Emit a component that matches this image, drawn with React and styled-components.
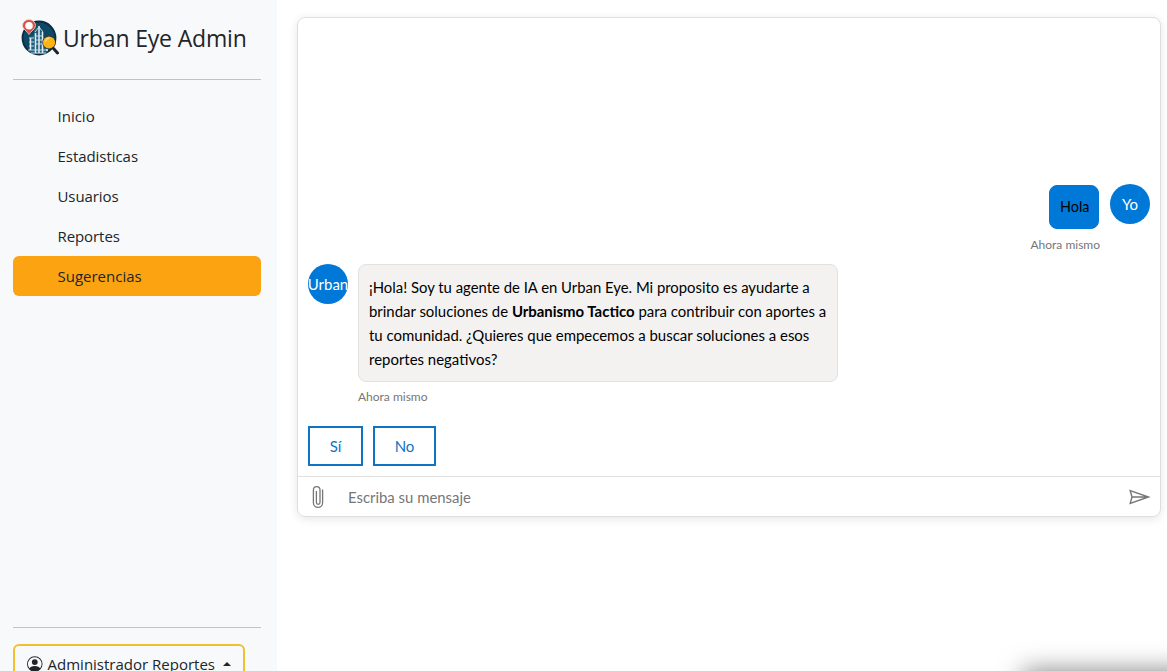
import React from 'react';
import styled, { createGlobalStyle } from 'styled-components';
import { BsPersonCircle } from 'react-icons/bs';

const GlobalStyle = createGlobalStyle`
  *, *::before, *::after { box-sizing: border-box; }
  body { margin: 0; background: #fff; overflow: hidden; }
`;

const Page = styled.div`
  display: flex;
  height: 671px;
  overflow: hidden;
  position: relative;
  font-family: 'Open Sans', 'Noto Sans', sans-serif;
  color: #212529;
`;

const Sidebar = styled.aside`
  display: flex;
  flex-direction: column;
  flex: none;
  width: 277px;
  height: 700px;
  padding: 16px 16px 16px 13px;
  background: #f8f9fb;
`;

const Brand = styled.header`
  display: flex;
  align-items: center;
  height: 44px;
  padding-left: 8px;
  gap: 4px;
`;

const BrandName = styled.span`
  font-size: 23px;
  line-height: 36px;
  letter-spacing: -0.16px;
  white-space: nowrap;
`;

const Rule = styled.hr`
  width: 100%;
  height: 1px;
  margin: ${(p) => p.$margin};
  border: 0;
  background: #c1c3c5;
`;

const Nav = styled.nav`
  display: flex;
  flex-direction: column;
  flex: 1;
`;

const NavItem = styled.a`
  height: 40px;
  padding-left: 44.500px;
  border-radius: 6px;
  background: ${(p) => (p.$active ? '#fca311' : 'transparent')};
  font-size: 15px;
  line-height: 40px;
  letter-spacing: ${(p) => p.$track}px;
`;

const AccountButton = styled.button`
  display: flex;
  align-items: center;
  width: 232px;
  height: 40px;
  padding: 0 12px;
  border: 2px solid #f2bf30;
  border-radius: 6px;
  background: transparent;
  color: #212529;
  font: 15px/24px 'Open Sans', 'Noto Sans', sans-serif;
  white-space: nowrap;
`;

const AccountName = styled.span`
  margin: 0 8px 0 5px;
`;

const Caret = styled.span`
  border-right: 4.8px solid transparent;
  border-bottom: 4.8px solid #212529;
  border-left: 4.8px solid transparent;
`;

const Main = styled.main`
  flex: 1;
  padding: 17px 6px 0 20px;
`;

const ChatCard = styled.section`
  display: flex;
  flex-direction: column;
  height: 500px;
  border: 1px solid #dedede;
  border-radius: 8px;
  box-shadow: 0 2px 10px rgba(0, 0, 0, 0.1);
  font-family: Lato, 'Open Sans', sans-serif;
  font-size: 15px;
  color: #000;
`;

const Transcript = styled.div`
  display: flex;
  flex-direction: column;
  justify-content: flex-end;
  flex: 1;
  gap: 12px;
  padding: 0 10px 10px;
`;

const Message = styled.div`
  display: flex;
  justify-content: ${(p) => (p.$own ? 'flex-end' : 'flex-start')};
  gap: ${(p) => (p.$own ? 11 : 10)}px;
`;

const Avatar = styled.div`
  display: flex;
  align-items: center;
  justify-content: center;
  flex: none;
  width: 40px;
  height: 40px;
  border-radius: 50%;
  overflow: hidden;
  background: #0078d7;
  color: #fff;
`;

const Stack = styled.div`
  display: flex;
  flex-direction: column;
  align-items: ${(p) => (p.$own ? 'flex-end' : 'flex-start')};
`;

const Bubble = styled.div`
  margin-top: ${(p) => (p.$own ? 1 : 0)}px;
  padding: 10px;
  border: 1px solid ${(p) => (p.$own ? '#0078d7' : '#e2e1e0')};
  border-radius: 8px;
  background: ${(p) => (p.$own ? '#0078d7' : '#f3f2f1')};
  width: ${(p) => (p.$own ? 50 : 480)}px;
  height: ${(p) => (p.$own ? 44 : 118)}px;
  line-height: ${(p) => (p.$own ? 22 : 24)}px;
  white-space: nowrap;
`;

const Line = styled.div`
  font-size: ${(p) => p.$size}px;
`;

const Time = styled.div`
  height: 15px;
  margin: ${(p) => p.$margin};
  color: #767676;
  font-size: 12px;
  line-height: 15px;
`;

const Suggestions = styled.div`
  display: flex;
  gap: 10px;
  margin-top: 10px;
`;

const Suggestion = styled.button`
  width: ${(p) => p.$width}px;
  height: 40px;
  padding: 0;
  border: 2px solid #0f74c4;
  background: #fff;
  color: #0f74c4;
  font: 15px Lato, 'Open Sans', sans-serif;
`;

const SendBox = styled.footer`
  display: flex;
  align-items: center;
  height: 40px;
  border-top: 1px solid #e2e2e2;
  color: #767676;
`;

const IconSlot = styled.div`
  display: flex;
  align-items: center;
  justify-content: center;
  width: 40px;
  height: 39px;
`;

const Prompt = styled.div`
  flex: 1;
  padding-left: 10px;
  font-size: 14.900px;
`;

const CornerShade = styled.div`
  position: absolute;
  right: -40px;
  bottom: -22px;
  width: 180px;
  height: 18px;
  box-shadow: 0 0 26px 4px rgba(0, 0, 0, 0.5);
`;

const Logo = () => (
  <svg width="38" height="38" viewBox="0 0 38 38">
    <circle cx="18" cy="19" r="16.500" fill="#0f4865" stroke="#0b2c41" strokeWidth="1.800" />
    <path d="M8 33V18l5-2v-5l5-5 4 6v6l5 2v13l-4 2H13z" fill="#1c5f80" />
    <path d="M9.500 31V19M14.500 34V14M18 34V7M21.500 34V13M26 32v-6" fill="none" stroke="#e7eef0" strokeWidth="1.500" />
    <path d="M8 19h5M14 13l4-5 4 5M14 17h8M14 21h8M14 25h8M8 23h5M8 27h5M7 31h20M10 34h15" fill="none" stroke="#d5e4e8" strokeWidth=".9" />
    <circle cx="28" cy="23.500" r="6.800" fill="#173043" />
    <circle cx="28" cy="23.500" r="6.100" fill="#fbb414" />
    <path d="M24.500 22.500a4.500 4.500 0 0 1 4-3.500" fill="none" stroke="#ffd768" strokeWidth="1.500" />
    <path d="M32.500 29.500l4 4.500" stroke="#19242d" strokeWidth="3" strokeLinecap="round" />
    <path d="M8 15.500C6 12 1.500 10 1.500 6.500a6.500 6 0 0 1 13 0c0 3.500-4.500 5.500-6.500 9z" fill="#d75345" stroke="#edd5d0" strokeWidth=".8" />
    <circle cx="8" cy="6.700" r="3.800" fill="#fff" />
  </svg>
);

const Paperclip = () => (
  <svg width="12" height="24" viewBox="0 0 12 24" fill="none" stroke="#767676" strokeWidth="1.300">
    <path d="M10.600 4.500v13.200a4.600 4.600 0 0 1-9.200 0V5a3.300 3.300 0 0 1 6.600 0v12.500a1.800 1.800 0 0 1-3.600 0V6" />
  </svg>
);

const SendIcon = () => (
  <svg width="22" height="16" viewBox="0 0 22 16" fill="none" stroke="#767676" strokeWidth="1.400">
    <path d="M1.200 1.700L19.500 8 1.200 14.300 3 8zM3 8h16" />
  </svg>
);

const NAV = [
  ['Inicio', 0],
  ['Estadisticas', -0.05],
  ['Usuarios', -0.08],
  ['Reportes', -0.08],
  ['Sugerencias', 0],
];

export default function App() {
  return (
    <Page>
      <GlobalStyle />
      <Sidebar>
        <Brand>
          <Logo />
          <BrandName>Urban Eye Admin</BrandName>
        </Brand>
        <Rule $margin="19px 0 16px" />
        <Nav>
          {NAV.map(([label, track]) => (
            <NavItem key={label} $track={track} $active={label === 'Sugerencias'}>
              {label}
            </NavItem>
          ))}
        </Nav>
        <Rule $margin="0 0 16px" />
        <AccountButton>
          <BsPersonCircle size={16} />
          <AccountName>Administrador Reportes</AccountName>
          <Caret />
        </AccountButton>
      </Sidebar>
      <Main>
        <ChatCard>
          <Transcript>
            <Message $own>
              <Stack $own>
                <Bubble $own>
                  <Line $size={14.4}>Hola</Line>
                </Bubble>
                <Time $margin="8px -1px 0 0">Ahora mismo</Time>
              </Stack>
              <Avatar>Yo</Avatar>
            </Message>
            <Message>
              <Avatar>Urban</Avatar>
              <Stack>
                <Bubble>
                  <Line $size={14.86}>¡Hola! Soy tu agente de IA en Urban Eye. Mi proposito es ayudarte a</Line>
                  <Line $size={14.93}>
                    brindar soluciones de <b>Urbanismo Tactico</b> para contribuir con aportes a
                  </Line>
                  <Line $size={14.96}>tu comunidad. ¿Quieres que empecemos a buscar soluciones a esos</Line>
                  <Line $size={14.96}>reportes negativos?</Line>
                </Bubble>
                <Time $margin="7px 0 0">Ahora mismo</Time>
              </Stack>
            </Message>
            <Suggestions>
              <Suggestion $width={55}>Sí</Suggestion>
              <Suggestion $width={63}>No</Suggestion>
            </Suggestions>
          </Transcript>
          <SendBox>
            <IconSlot>
              <Paperclip />
            </IconSlot>
            <Prompt>Escriba su mensaje</Prompt>
            <IconSlot>
              <SendIcon />
            </IconSlot>
          </SendBox>
        </ChatCard>
      </Main>
      <CornerShade />
    </Page>
  );
}
